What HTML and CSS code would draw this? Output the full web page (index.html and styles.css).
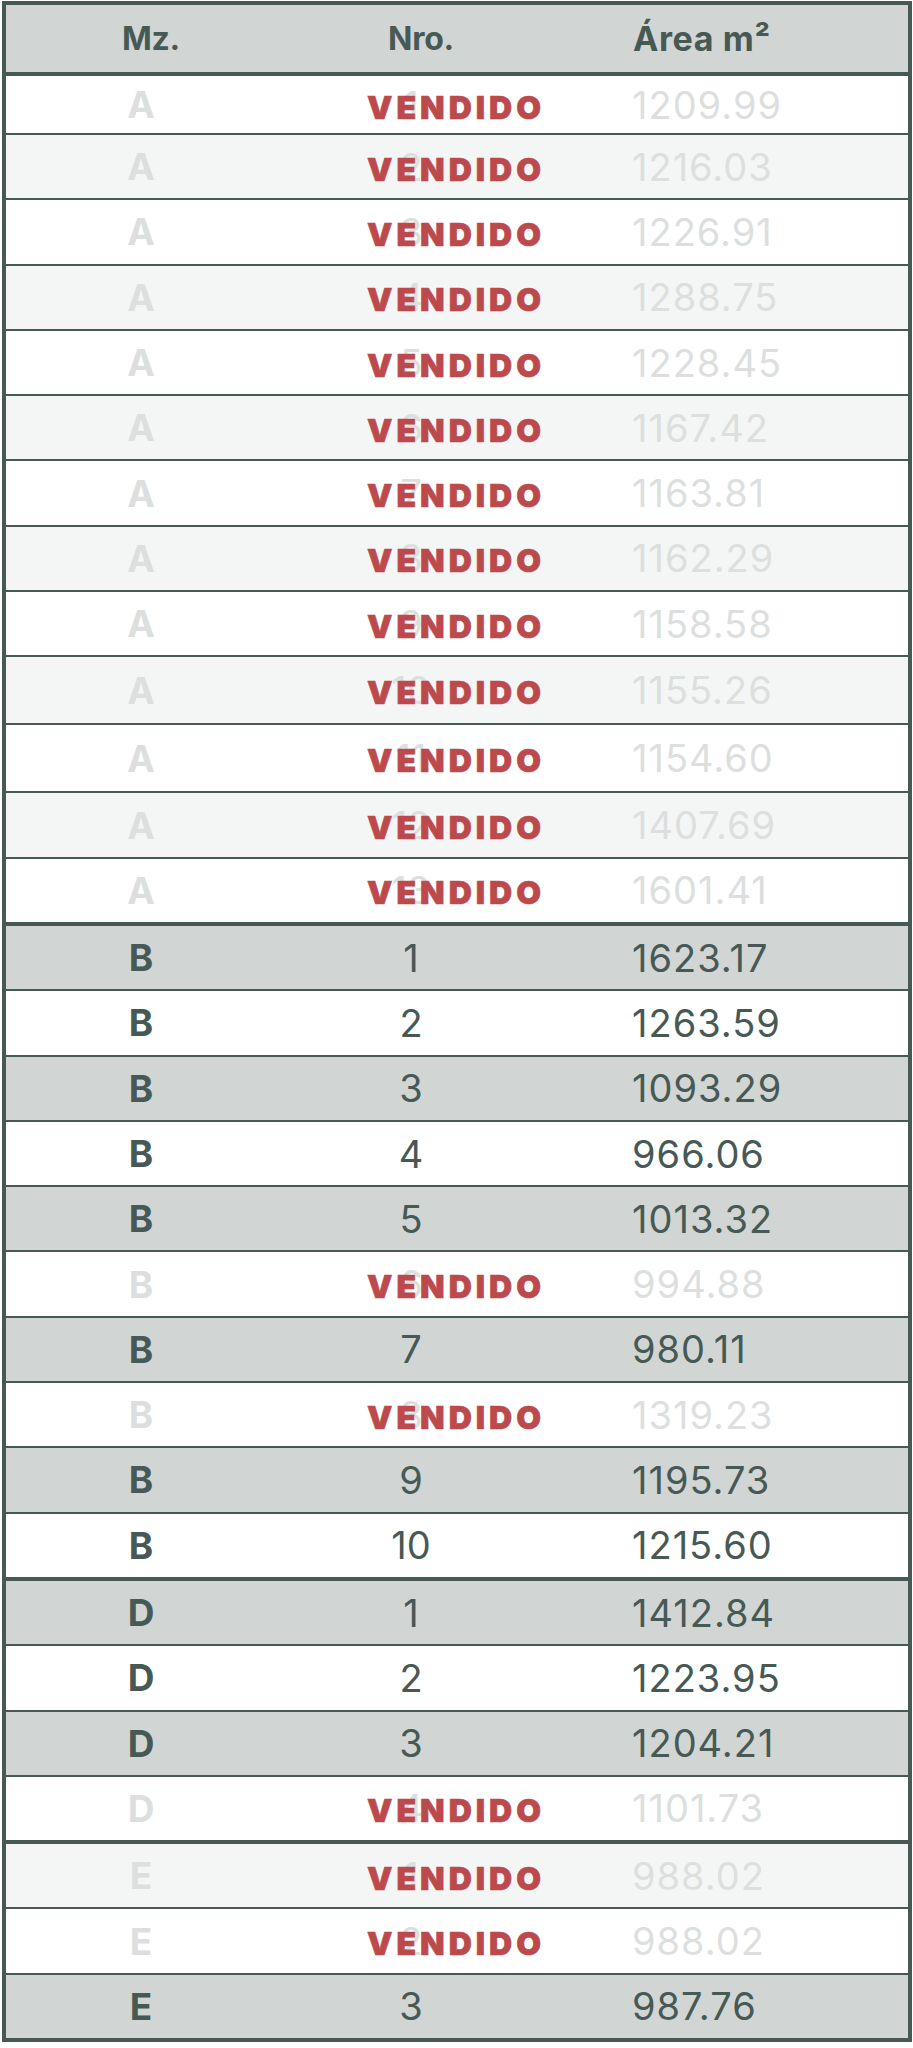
FILE: index.html
```html
<!DOCTYPE html>
<html lang="es">
<head>
<meta charset="utf-8">
<title>Lotes</title>
<link rel="stylesheet" href="styles.css">
</head>
<body>
<div class="table">
  <div class="head">
    <div class="hc c1">Mz.</div>
    <div class="hc c2">Nro.</div>
    <div class="hc c3">Área m²</div>
  </div>

  <div class="group">
    <div class="row sold white first"><div class="mz">A</div><div class="nro">1<span class="badge">VENDIDO</span></div><div class="area">1209.99</div></div>
    <div class="row sold light"><div class="mz">A</div><div class="nro">2<span class="badge">VENDIDO</span></div><div class="area">1216.03</div></div>
    <div class="row sold white"><div class="mz">A</div><div class="nro">3<span class="badge">VENDIDO</span></div><div class="area">1226.91</div></div>
    <div class="row sold light"><div class="mz">A</div><div class="nro">4<span class="badge">VENDIDO</span></div><div class="area">1288.75</div></div>
    <div class="row sold white"><div class="mz">A</div><div class="nro">5<span class="badge">VENDIDO</span></div><div class="area">1228.45</div></div>
    <div class="row sold light"><div class="mz">A</div><div class="nro">6<span class="badge">VENDIDO</span></div><div class="area">1167.42</div></div>
    <div class="row sold white"><div class="mz">A</div><div class="nro">7<span class="badge">VENDIDO</span></div><div class="area">1163.81</div></div>
    <div class="row sold light"><div class="mz">A</div><div class="nro">8<span class="badge">VENDIDO</span></div><div class="area">1162.29</div></div>
    <div class="row sold white"><div class="mz">A</div><div class="nro">9<span class="badge">VENDIDO</span></div><div class="area">1158.58</div></div>
    <div class="row sold light tall"><div class="mz">A</div><div class="nro">10<span class="badge">VENDIDO</span></div><div class="area">1155.26</div></div>
    <div class="row sold white tall"><div class="mz">A</div><div class="nro">11<span class="badge">VENDIDO</span></div><div class="area">1154.60</div></div>
    <div class="row sold light"><div class="mz">A</div><div class="nro">12<span class="badge">VENDIDO</span></div><div class="area">1407.69</div></div>
    <div class="row sold white"><div class="mz">A</div><div class="nro">13<span class="badge">VENDIDO</span></div><div class="area">1601.41</div></div>
  </div>

  <div class="group sep">
    <div class="row grey"><div class="mz">B</div><div class="nro">1</div><div class="area">1623.17</div></div>
    <div class="row white"><div class="mz">B</div><div class="nro">2</div><div class="area">1263.59</div></div>
    <div class="row grey"><div class="mz">B</div><div class="nro">3</div><div class="area">1093.29</div></div>
    <div class="row white"><div class="mz">B</div><div class="nro">4</div><div class="area">966.06</div></div>
    <div class="row grey"><div class="mz">B</div><div class="nro">5</div><div class="area">1013.32</div></div>
    <div class="row sold white"><div class="mz">B</div><div class="nro">6<span class="badge">VENDIDO</span></div><div class="area">994.88</div></div>
    <div class="row grey"><div class="mz">B</div><div class="nro">7</div><div class="area">980.11</div></div>
    <div class="row sold white"><div class="mz">B</div><div class="nro">8<span class="badge">VENDIDO</span></div><div class="area">1319.23</div></div>
    <div class="row grey"><div class="mz">B</div><div class="nro">9</div><div class="area">1195.73</div></div>
    <div class="row white"><div class="mz">B</div><div class="nro">10</div><div class="area">1215.60</div></div>
  </div>

  <div class="group sep">
    <div class="row grey"><div class="mz">D</div><div class="nro">1</div><div class="area">1412.84</div></div>
    <div class="row white"><div class="mz">D</div><div class="nro">2</div><div class="area">1223.95</div></div>
    <div class="row grey"><div class="mz">D</div><div class="nro">3</div><div class="area">1204.21</div></div>
    <div class="row sold white"><div class="mz">D</div><div class="nro">4<span class="badge">VENDIDO</span></div><div class="area">1101.73</div></div>
  </div>

  <div class="group sep">
    <div class="row sold light"><div class="mz">E</div><div class="nro">1<span class="badge">VENDIDO</span></div><div class="area">988.02</div></div>
    <div class="row sold white"><div class="mz">E</div><div class="nro">2<span class="badge">VENDIDO</span></div><div class="area">988.02</div></div>
    <div class="row grey"><div class="mz">E</div><div class="nro">3</div><div class="area">987.76</div></div>
  </div>
</div>
</body>
</html>
```

FILE: styles.css
```css
* { box-sizing: border-box; }

html, body {
  margin: 0;
  padding: 0;
  background: #ffffff;
}

body {
  font-family: Inter, Roboto, "Liberation Sans", Arial, sans-serif;
  color: #475955;
}

.table {
  margin: 1px 1px 0 2px;
  border: 4px solid #475955;
  background: #ffffff;
}

.head {
  display: grid;
  grid-template-columns: 270px 270px 1fr;
  align-items: center;
  height: 71px;
  background: #d1d5d4;
  border-bottom: 4px solid #475955;
}

.hc {
  font-weight: 700;
  font-size: 32px;
  line-height: 1;
  color: #475955;
  letter-spacing: -0.3px;
}

.hc.c1, .hc.c2 {
  text-align: center;
  padding-left: 20px;
}

.hc.c3 {
  padding-left: 87px;
  font-size: 34px;
  letter-spacing: 0.6px;
}

.group.sep {
  border-top: 4px solid #475955;
  box-shadow: inset 0 1px 0 #aab3b0;
}

.row {
  display: grid;
  grid-template-columns: 270px 270px 1fr;
  align-items: center;
  height: 65.3px;
  border-bottom: 2px solid #475955;
}

.row.first { height: 59px; }
.row.tall { height: 68px; }

.group .row:last-child {
  border-bottom: 0;
  height: 63.3px;
}

.row.grey { background: #d1d5d4; }
.row.white { background: #ffffff; }
.row.light { background: #f4f6f5; }

.mz {
  text-align: center;
  font-weight: 700;
  font-size: 37px;
  line-height: 1;
}

.nro {
  position: relative;
  text-align: center;
  font-size: 38px;
  line-height: 1;
}

.area {
  padding-left: 86px;
  font-size: 38px;
  letter-spacing: 1px;
  line-height: 1;
}

.row.sold .mz,
.row.sold .nro,
.row.sold .area {
  color: #dcdfde;
}

.badge {
  position: absolute;
  left: 91px;
  top: 50%;
  transform: translateY(-40%);
  font-family: Inter, Roboto, "Liberation Sans", Arial, sans-serif;
  font-weight: 900;
  font-size: 32px;
  letter-spacing: 4px;
  line-height: 1;
  color: #bc494b;
  white-space: nowrap;
  -webkit-text-stroke: 0.6px #bc494b;
}
```
